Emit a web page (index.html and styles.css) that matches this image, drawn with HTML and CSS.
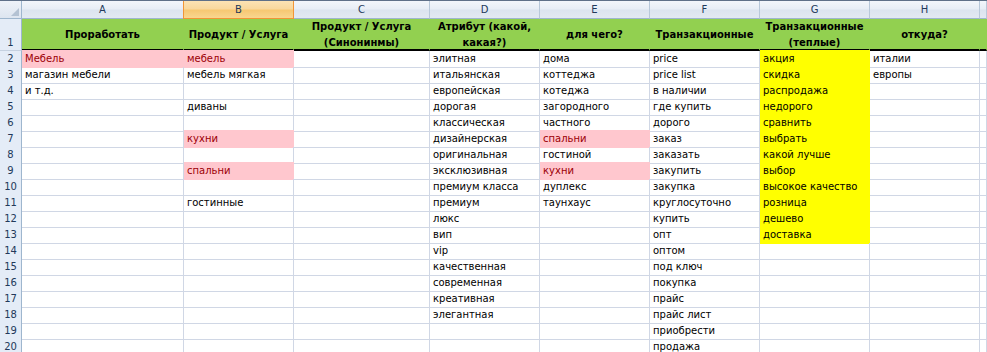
FILE: index.html
```html
<!DOCTYPE html>
<html lang="ru">
<head>
<meta charset="utf-8">
<title>Лист</title>
<link rel="stylesheet" href="styles.css">
</head>
<body>
<div class="sheet">
  <div class="row hdr">
    <div class="corner"><span class="tri"></span></div>
    <div class="ch">A</div><div class="ch sel">B</div><div class="ch">C</div><div class="ch">D</div><div class="ch">E</div><div class="ch">F</div><div class="ch">G</div><div class="ch">H</div><div class="ch last"></div>
  </div>
  <div class="row r1">
    <div class="rh">1</div>
    <div class="c g"><span>Проработать</span></div>
    <div class="c g"><span>Продукт / Услуга</span></div>
    <div class="c g"><span>Продукт / Услуга<br>(Синонинмы)</span></div>
    <div class="c g"><span>Атрибут (какой,<br>какая?)</span></div>
    <div class="c g"><span>для чего?</span></div>
    <div class="c g"><span>Транзакционные</span></div>
    <div class="c g"><span>Транзакционные<br>(теплые)</span></div>
    <div class="c g"><span>откуда?</span></div>
    <div class="c g"></div>
  </div>
  <div class="row"><div class="rh">2</div><div class="c p">Мебель</div><div class="c p">мебель</div><div class="c"></div><div class="c">элитная</div><div class="c">дома</div><div class="c">price</div><div class="c y">акция</div><div class="c">италии</div><div class="c"></div></div>
  <div class="row"><div class="rh">3</div><div class="c">магазин мебели</div><div class="c">мебель мягкая</div><div class="c"></div><div class="c">итальянская</div><div class="c">коттеджа</div><div class="c">price list</div><div class="c y">скидка</div><div class="c">европы</div><div class="c"></div></div>
  <div class="row"><div class="rh">4</div><div class="c">и т.д.</div><div class="c"></div><div class="c"></div><div class="c">европейская</div><div class="c">котеджа</div><div class="c">в наличии</div><div class="c y">распродажа</div><div class="c"></div><div class="c"></div></div>
  <div class="row"><div class="rh">5</div><div class="c"></div><div class="c">диваны</div><div class="c"></div><div class="c">дорогая</div><div class="c">загородного</div><div class="c">где купить</div><div class="c y">недорого</div><div class="c"></div><div class="c"></div></div>
  <div class="row"><div class="rh">6</div><div class="c"></div><div class="c"></div><div class="c"></div><div class="c">классическая</div><div class="c">частного</div><div class="c">дорого</div><div class="c y">сравнить</div><div class="c"></div><div class="c"></div></div>
  <div class="row"><div class="rh">7</div><div class="c"></div><div class="c p">кухни</div><div class="c"></div><div class="c">дизайнерская</div><div class="c p">спальни</div><div class="c">заказ</div><div class="c y">выбрать</div><div class="c"></div><div class="c"></div></div>
  <div class="row"><div class="rh">8</div><div class="c"></div><div class="c"></div><div class="c"></div><div class="c">оригинальная</div><div class="c">гостиной</div><div class="c">заказать</div><div class="c y">какой лучше</div><div class="c"></div><div class="c"></div></div>
  <div class="row"><div class="rh">9</div><div class="c"></div><div class="c p">спальни</div><div class="c"></div><div class="c">эксклюзивная</div><div class="c p">кухни</div><div class="c">закупить</div><div class="c y">выбор</div><div class="c"></div><div class="c"></div></div>
  <div class="row"><div class="rh">10</div><div class="c"></div><div class="c"></div><div class="c"></div><div class="c">премиум класса</div><div class="c">дуплекс</div><div class="c">закупка</div><div class="c y">высокое качество</div><div class="c"></div><div class="c"></div></div>
  <div class="row"><div class="rh">11</div><div class="c"></div><div class="c">гостинные</div><div class="c"></div><div class="c">премиум</div><div class="c">таунхаус</div><div class="c">круглосуточно</div><div class="c y">розница</div><div class="c"></div><div class="c"></div></div>
  <div class="row"><div class="rh">12</div><div class="c"></div><div class="c"></div><div class="c"></div><div class="c">люкс</div><div class="c"></div><div class="c">купить</div><div class="c y">дешево</div><div class="c"></div><div class="c"></div></div>
  <div class="row"><div class="rh">13</div><div class="c"></div><div class="c"></div><div class="c"></div><div class="c">вип</div><div class="c"></div><div class="c">опт</div><div class="c y">доставка</div><div class="c"></div><div class="c"></div></div>
  <div class="row"><div class="rh">14</div><div class="c"></div><div class="c"></div><div class="c"></div><div class="c">vip</div><div class="c"></div><div class="c">оптом</div><div class="c"></div><div class="c"></div><div class="c"></div></div>
  <div class="row"><div class="rh">15</div><div class="c"></div><div class="c"></div><div class="c"></div><div class="c">качественная</div><div class="c"></div><div class="c">под ключ</div><div class="c"></div><div class="c"></div><div class="c"></div></div>
  <div class="row"><div class="rh">16</div><div class="c"></div><div class="c"></div><div class="c"></div><div class="c">современная</div><div class="c"></div><div class="c">покупка</div><div class="c"></div><div class="c"></div><div class="c"></div></div>
  <div class="row"><div class="rh">17</div><div class="c"></div><div class="c"></div><div class="c"></div><div class="c">креативная</div><div class="c"></div><div class="c">прайс</div><div class="c"></div><div class="c"></div><div class="c"></div></div>
  <div class="row"><div class="rh">18</div><div class="c"></div><div class="c"></div><div class="c"></div><div class="c">элегантная</div><div class="c"></div><div class="c">прайс лист</div><div class="c"></div><div class="c"></div><div class="c"></div></div>
  <div class="row"><div class="rh">19</div><div class="c"></div><div class="c"></div><div class="c"></div><div class="c"></div><div class="c"></div><div class="c">приобрести</div><div class="c"></div><div class="c"></div><div class="c"></div></div>
  <div class="row"><div class="rh">20</div><div class="c"></div><div class="c"></div><div class="c"></div><div class="c"></div><div class="c"></div><div class="c">продажа</div><div class="c"></div><div class="c"></div><div class="c"></div></div>
</div>
</body>
</html>
```

FILE: styles.css
```css
* { box-sizing: border-box; margin: 0; padding: 0; }
html, body { width: 987px; height: 352px; overflow: hidden; background: #fff; }
body { font-family: "DejaVu Sans", "Liberation Sans", sans-serif; font-size: 10px; color: #000; }

.sheet { border-top: 1px solid #5f7088; }

.row {
  display: grid;
  grid-template-columns: 22px 162px 110px 136px 110px 110px 110px 110px 110px 1fr;
  height: 16px;
}

.c {
  border-right: 1px solid #d0d7e5;
  border-bottom: 1px solid #d0d7e5;
  padding: 0 3px;
  white-space: nowrap;
  overflow: hidden;
  line-height: 16px;
}

.p { background: #ffc7ce; color: #9c0006; border-color: #ffc7ce; box-shadow: 0 -1px 0 #ffc7ce; }
.y { background: #ffff00; border-color: #ffff00; box-shadow: 0 -1px 0 #ffff00; }

.rh {
  background: #e4ecf7;
  border-right: 1px solid #9eb6ce;
  border-bottom: 1px solid #c5d1e0;
  color: #22395a;
  text-align: center;
  line-height: 16px;
}

/* column header row */
.hdr { height: 18px; }
.corner {
  position: relative;
  background: linear-gradient(#eef2f8, #dde5f0);
  border-right: 1px solid #9eb6ce;
  border-bottom: 1px solid #9eb6ce;
}
.tri {
  position: absolute; right: 2px; bottom: 2px;
  width: 0; height: 0;
  border-left: 8px solid transparent;
  border-bottom: 8px solid #b4c2d3;
}
.ch {
  background: linear-gradient(#f3f6fb 0%, #e8eef6 45%, #dce4ef 55%, #e3e9f2 100%);
  border-right: 1px solid #b8c8da;
  border-bottom: 1px solid #9eb6ce;
  color: #22395a;
  text-align: center;
  line-height: 17px;
}
.ch.sel {
  background: linear-gradient(#fce3b4 0%, #f9d89e 45%, #f7c873 55%, #f9d690 100%);
  border-right-color: #f29536;
  border-bottom-color: #f29536;
  box-shadow: -1px 0 0 #f29536;
}

/* row 1 */
.r1 { height: 32px; }
.r1 .rh {
  display: flex; align-items: flex-end; justify-content: center;
  line-height: 15px;
  border-bottom: 1px solid #c5d1e0;
}
.g {
  background: #92d050;
  border-right-color: #92d050;
  border-bottom: 2px solid #000;
  font-weight: bold;
  text-align: center;
  display: flex; align-items: center; justify-content: center;
  line-height: 16px;
  white-space: normal;
  padding-top: 1px;
}
.g span { display: block; }
```
